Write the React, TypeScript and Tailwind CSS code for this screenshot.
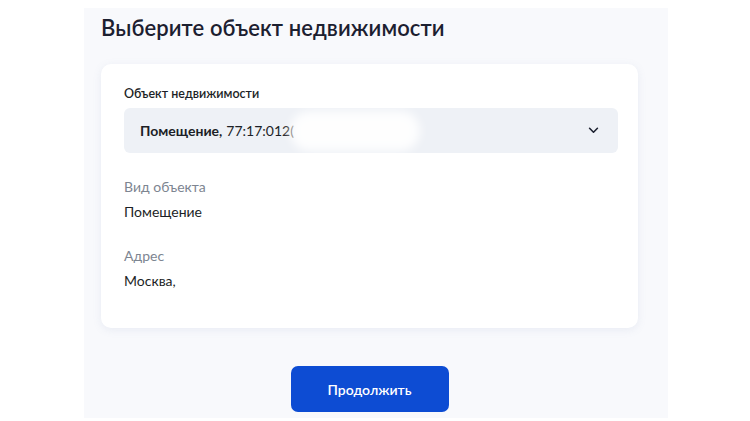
import React from 'react';

const Field: React.FC<{ label: string; value: React.ReactNode }> = ({ label, value }) => (
    <div className="flex flex-col gap-[7px]">
        <span className="text-[14px] leading-[18px] text-[#7d8591]">{label}</span>
        <span className="text-[14px] leading-[18px] text-[#1c1f26]">{value}</span>
    </div>
);

const App: React.FC = () => {
    return (
        <div className="w-[750px] h-[421px] bg-white overflow-hidden font-['Lato','Noto_Sans',sans-serif]">
            <div className="ml-[84px] mt-[8px] w-[584px] h-[410px] bg-[#f8f9fc] pl-[17px] pr-[30px] pt-[7px]">
                <h1 className="text-[22px] leading-[26px] font-semibold text-[#1c2030] tracking-[0.1px]">
                    Выберите объект недвижимости
                </h1>

                {/* Card */}
                <div className="mt-[23px] bg-white rounded-[10px] shadow-[0_2px_8px_rgba(120,140,180,0.12)] pl-[23px] pr-[20px] pt-[22px] pb-[38px]">
                    <div className="text-[12.5px] leading-[16px] font-semibold text-[#1c1f26]">Объект недвижимости</div>
                    <div className="mt-[6px] h-[45px] rounded-[6px] bg-[#eef1f6] pl-[16px] pr-[19px] flex items-center justify-between">
                        <div className="flex items-center text-[14px] text-[#1c1f26]">
                            <span className="font-bold">Помещение,</span>
                            <span className="ml-[4px]">77:17:012(</span>
                            <span className="ml-[-4px] w-[130px] h-[40px] bg-white/90 blur-[5px] rounded-full" />
                        </div>
                        <svg width="11" height="7" viewBox="0 0 12 8" fill="none">
                            <path d="M1.5 1.5L6 6L10.5 1.5" stroke="#1c2030" strokeWidth="1.8" strokeLinecap="round" strokeLinejoin="round" />
                        </svg>
                    </div>

                    <div className="mt-[25px] flex flex-col gap-[26px]">
                        <Field label="Вид объекта" value="Помещение" />
                        <Field label="Адрес" value="Москва," />
                    </div>
                </div>

                <div className="mt-[38px] flex justify-center">
                    <button className="w-[158px] h-[46px] rounded-[7px] bg-[#0d4cd3] text-white text-[14px] font-semibold">
                        Продолжить
                    </button>
                </div>
            </div>
        </div>
    );
};

export default App;
